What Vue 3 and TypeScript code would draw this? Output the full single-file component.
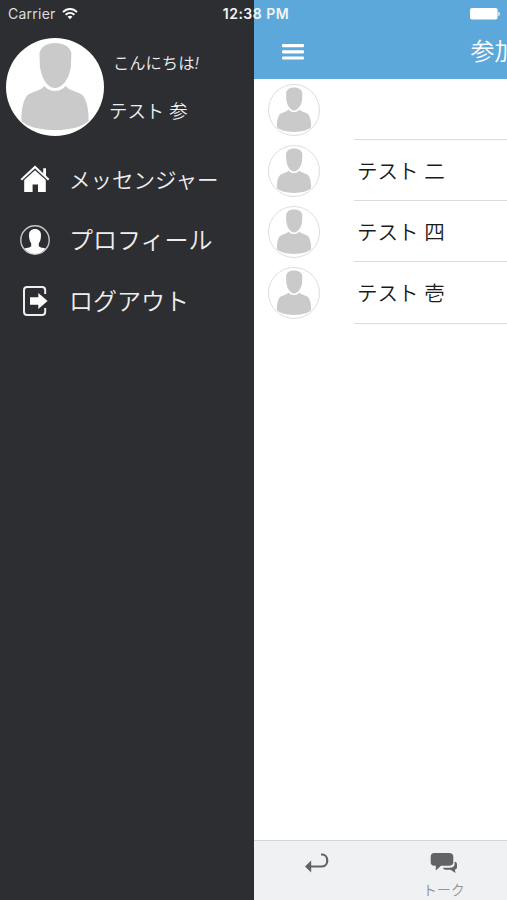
<script setup lang="ts">
interface MenuEntry {
  id: 'home' | 'profile' | 'logout'
  label: string
}

const menu: MenuEntry[] = [
  { id: 'home', label: 'メッセンジャー' },
  { id: 'profile', label: 'プロフィール' },
  { id: 'logout', label: 'ログアウト' },
]

const people: string[] = ['', 'テスト 二', 'テスト 四', 'テスト 壱']
</script>

<template>
  <div class="screen">
    <svg class="defs" aria-hidden="true">
      <symbol id="person" viewBox="0 0 98 98">
        <path d="M49 5C57 5 64 8.5 65.3 15L65 27C64.5 37 58 50 49 50C40 50 34.5 37 33.8 27L33.5 15C35 8.5 41 5 49 5Z" />
        <path d="M38.5 48C41 51.5 45 53 49 53C53 53 57 51.5 59.5 48L63 51L75 56C81 59.5 83 74 82.5 83C75 89.5 64 92 49 92C34 92 23 89.5 15.5 83C15 74 17 59.5 23 56L35 51Z" />
      </symbol>
    </svg>

    <header class="status">
      <div class="carrier">
        <span>Carrier</span>
        <svg width="16" height="12" viewBox="0 0 16 12" fill="none" stroke="#fff" stroke-width="1.9">
          <path d="M1 4.1C5 0 11 0 15 4.1" />
          <path d="M3.6 6.8C6.2 4.3 9.8 4.3 12.4 6.8" />
          <path d="M5.6 8.8C7 7.5 9 7.5 10.4 8.8L8 11.3Z" fill="#fff" stroke="none" />
        </svg>
      </div>
      <div class="time">12:38 PM</div>
      <svg class="battery" width="31" height="12" viewBox="0 0 31 12" fill="#fff">
        <rect x="0" y="0" width="27.6" height="11.6" rx="2" />
        <path d="M28.4 3.7C30.3 4.1 30.3 7.5 28.4 7.9Z" />
      </svg>
    </header>

    <aside class="drawer">
      <section class="user">
        <div class="portrait"><svg><use href="#person" /></svg></div>
        <div class="user-text">
          <p class="hello">こんにちは<em>!</em></p>
          <p class="name">テスト 参</p>
        </div>
      </section>
      <nav class="menu">
        <a v-for="entry in menu" :key="entry.id" class="entry" :class="entry.id">
          <svg v-if="entry.id === 'home'" width="30" height="30" viewBox="0 0 30 30" fill="#fff">
            <path d="M15 6.2L25.8 16V28H18V20.5H12.6V28H4.2V16Z" />
            <path d="M1.3 15.7L15 3L28.7 15.7" fill="none" stroke="#fff" stroke-width="2.1" />
            <path d="M23.2 4.2H26V12.5L23.2 9.8Z" />
          </svg>
          <svg v-else-if="entry.id === 'profile'" width="30" height="30" viewBox="0 0 30 30">
            <circle cx="15" cy="15" r="14.2" fill="none" stroke="#c8c9cb" stroke-width="1.4" />
            <path d="M15 4C19 4 21.2 6.7 21 10.5C21 14 20 16.8 18.8 18.2V21.2C20.5 22.7 23.5 22.7 25.5 23.6C20.5 30.7 9.5 30.7 4.5 23.6C6.5 22.7 9.7 22.7 11.2 21.2V18.2C10 16.8 9 14 9 10.5C8.8 6.7 11 4 15 4Z" fill="#fff" />
          </svg>
          <svg v-else width="30" height="30" viewBox="0 0 30 30">
            <path d="M25.2 8V4.3C25.2 2.2 24.2 1.1 22 1.1H7.2C5 1.1 4 2.2 4 4.3V25.7C4 27.8 5 28.9 7.2 28.9H22C24.2 28.9 25.2 27.8 25.2 25.7V22" fill="none" stroke="#eee" stroke-width="2" />
            <path d="M10 11.2H18.3V7L27.6 15L18.3 23V18.8H10Z" fill="#fff" />
          </svg>
          <span>{{ entry.label }}</span>
        </a>
      </nav>
    </aside>

    <main class="content">
      <div class="navbar">
        <svg class="burger" width="22" height="16" viewBox="0 0 22 16" fill="#fff">
          <rect y="0" width="22" height="3.2" rx="1" />
          <rect y="6.2" width="22" height="3.2" rx="1" />
          <rect y="12.4" width="22" height="3.2" rx="1" />
        </svg>
        <h1>参加</h1>
      </div>
      <ul class="people">
        <li v-for="(person, index) in people" :key="index">
          <div class="avatar"><svg><use href="#person" /></svg></div>
          <div class="person-name">{{ person }}</div>
        </li>
      </ul>
      <footer class="tabs">
        <div class="tab">
          <svg width="26" height="22" viewBox="0 0 26 22">
            <path d="M17 2.5H18C25 2.5 25 14.5 18 14.5H6" fill="none" stroke="#626364" stroke-width="2.2" />
            <path d="M1 14.5L7.2 8.5V20.5Z" fill="#626364" />
          </svg>
        </div>
        <div class="tab">
          <svg width="28" height="22" viewBox="0 0 28 22" fill="#626364">
            <path d="M4.5 1H19C22 1 23.3 2.5 23.3 5V10C23.3 12.5 22 13.8 19 13.8H11L5.8 18.5V13.8H4.5C1.8 13.8.7 12.5.7 10V5C.7 2.5 1.8 1 4.5 1Z" />
            <path d="M24.6 9.7C26.3 9.7 27 10.8 27 12.5V15C27 16.6 26.3 17.3 24.9 17.4L25.5 21L20.6 17.8H15.4C14 17.8 13.4 17 13 15.8H20C23 15.8 24.6 14.5 24.6 11.7Z" />
          </svg>
          <span>トーク</span>
        </div>
      </footer>
    </main>
  </div>
</template>

<style>
body {
  margin: 0;
}
</style>

<style scoped>
.screen {
  position: relative;
  display: grid;
  grid-template-columns: 254px 253px;
  width: 507px;
  height: 900px;
  overflow: hidden;
  background: #2d2e32;
  font-family: Inter, "Noto Sans CJK JP", sans-serif;
}
.defs {
  position: absolute;
  width: 0;
  height: 0;
}
.status {
  position: absolute;
  z-index: 2;
  top: 0;
  left: 0;
  box-sizing: border-box;
  display: grid;
  grid-template-columns: 1fr auto 1fr;
  align-items: center;
  width: 507px;
  height: 27px;
  padding: 0 6px 0 8px;
  color: #f4f4f5;
  font-size: 14px;
}
.carrier {
  display: flex;
  align-items: center;
  gap: 6px;
  color: #dcdddf;
  letter-spacing: 0.25px;
}
.time {
  margin-left: 3px;
  font-weight: 600;
  font-size: 14px;
  letter-spacing: 0.5px;
}
.battery {
  justify-self: end;
}
.drawer {
  color: #eeeeef;
}
.user {
  display: flex;
  height: 98px;
  padding: 37.5px 0 0 6px;
}
.portrait {
  width: 98px;
  height: 98px;
  border-radius: 50%;
  background: #fff;
}
.portrait svg,
.avatar svg {
  display: block;
  width: 100%;
  height: 100%;
  fill: #cacaca;
}
.user-text {
  display: flex;
  flex-direction: column;
  gap: 24px;
  padding: 13px 0 0 5px;
  white-space: nowrap;
}
p {
  margin: 0;
  line-height: 24px;
}
.hello {
  padding-left: 4px;
  font-size: 16.3px;
  font-weight: 350;
}
.name {
  font-size: 18.4px;
  font-weight: 350;
}
.menu {
  padding-top: 12.5px;
}
.entry {
  display: flex;
  align-items: center;
  gap: 19px;
  height: 61px;
  padding-left: 20px;
  font-size: 24px;
  font-weight: 350;
  white-space: nowrap;
}
.entry span {
  padding-bottom: 3px;
}
.home {
  font-size: 21.5px;
}
.home span {
  padding-bottom: 1px;
}
.content {
  display: flex;
  flex-direction: column;
  height: 900px;
  min-width: 0;
  overflow: hidden;
  background: #fff;
}
.navbar {
  box-sizing: border-box;
  display: flex;
  flex: none;
  align-items: center;
  height: 79px;
  padding: 24px 0 0 28px;
  background: #5da8da;
}
.burger {
  flex: none;
}
h1 {
  flex: none;
  margin: 0 0 0 166.5px;
  color: #fff;
  font-size: 24px;
  font-weight: 350;
  line-height: 30px;
}
.people {
  flex: 1;
  margin: 0;
  padding: 0;
  list-style: none;
}
li {
  display: flex;
  align-items: center;
  height: 61.15px;
  padding-left: 14px;
}
.avatar {
  box-sizing: border-box;
  width: 52px;
  height: 52px;
  margin-right: 34px;
  border: 1px solid #dedede;
  border-radius: 50%;
}
.person-name {
  box-sizing: border-box;
  flex: 1;
  height: 100%;
  padding-left: 3px;
  border-bottom: 1px solid #dcdcdc;
  color: #1a1a1a;
  font-size: 20.5px;
  font-weight: 350;
  line-height: 63px;
}
.tabs {
  box-sizing: border-box;
  display: flex;
  height: 60px;
  padding-top: 11px;
  border-top: 1px solid #d3d6d8;
  background: #eff1f3;
}
.tab {
  display: flex;
  flex: none;
  flex-direction: column;
  align-items: center;
  width: 126.5px;
  color: #929497;
  font-size: 14px;
  font-weight: 350;
  line-height: 20px;
}
.tab span {
  margin-top: 6px;
}
</style>
